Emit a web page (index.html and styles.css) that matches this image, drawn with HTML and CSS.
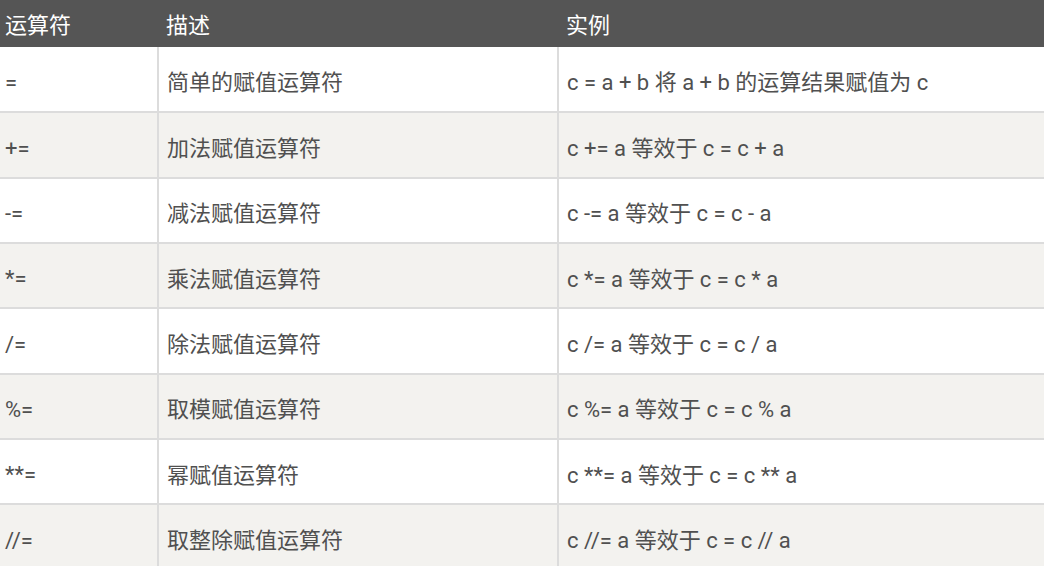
FILE: index.html
```html
<!DOCTYPE html>
<html lang="zh">
<head>
<meta charset="utf-8">
<title>赋值运算符</title>
<link rel="stylesheet" href="styles.css">
</head>
<body>
<table class="ops">
  <colgroup>
    <col class="c1"><col class="c2"><col class="c3">
  </colgroup>
  <thead>
    <tr><th>运算符</th><th>描述</th><th>实例</th></tr>
  </thead>
  <tbody>
    <tr><td>=</td><td>简单的赋值运算符</td><td>c = a + b 将 a + b 的运算结果赋值为 c</td></tr>
    <tr><td>+=</td><td>加法赋值运算符</td><td>c += a 等效于 c = c + a</td></tr>
    <tr><td>-=</td><td>减法赋值运算符</td><td>c -= a 等效于 c = c - a</td></tr>
    <tr><td>*=</td><td>乘法赋值运算符</td><td>c *= a 等效于 c = c * a</td></tr>
    <tr><td>/=</td><td>除法赋值运算符</td><td>c /= a 等效于 c = c / a</td></tr>
    <tr><td>%=</td><td>取模赋值运算符</td><td>c %= a 等效于 c = c % a</td></tr>
    <tr><td>**=</td><td>幂赋值运算符</td><td>c **= a 等效于 c = c ** a</td></tr>
    <tr><td>//=</td><td>取整除赋值运算符</td><td>c //= a 等效于 c = c // a</td></tr>
  </tbody>
</table>
</body>
</html>
```
FILE: styles.css
```css
html, body {
  margin: 0;
  padding: 0;
  background: #ffffff;
}
body {
  font-family: Roboto, "Noto Sans CJK SC", sans-serif;
  font-size: 22px;
  color: #505050;
  overflow: hidden;
}
.ops {
  width: 1044px;
  border-collapse: collapse;
  table-layout: fixed;
}
.c1 { width: 158px; }
.c2 { width: 400px; }
.c3 { width: 486px; }
.ops th {
  background: #555555;
  color: #ffffff;
  font-weight: normal;
  text-align: left;
  height: 47px;
  padding: 0 0 2px 5px;
  box-sizing: border-box;
  vertical-align: middle;
}
.ops th:nth-child(2),
.ops th:nth-child(3) { padding-left: 8px; }
.ops td {
  height: 65.35px;
  box-sizing: border-box;
  padding: 2px 0 0 5px;
  border-bottom: 2px solid #dcdcdc;
  vertical-align: middle;
  white-space: nowrap;
}
.ops tbody td:first-child {
  padding-top: 6px;
}
.ops td + td {
  border-left: 2px solid #dcdcdc;
  padding-left: 8px;
}
.ops tbody tr:nth-child(even) td {
  background: #f3f2ef;
}
```
